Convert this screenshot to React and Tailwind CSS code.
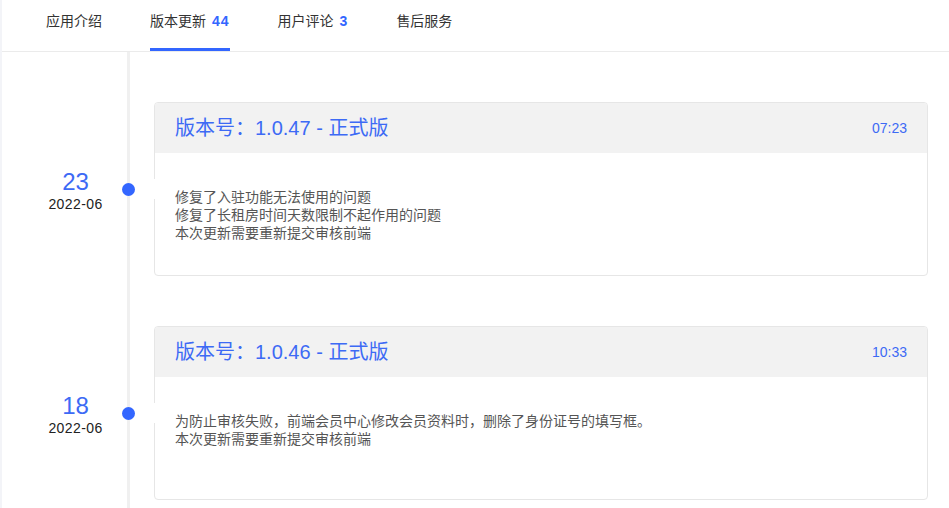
import React from 'react';

const tabs = [
  { label: '应用介绍' },
  { label: '版本更新', count: 44, active: true },
  { label: '用户评论', count: 3 },
  { label: '售后服务' },
];

const releases = [
  {
    day: '23',
    month: '2022-06',
    version: '1.0.47',
    time: '07:23',
    notes: ['修复了入驻功能无法使用的问题', '修复了长租房时间天数限制不起作用的问题', '本次更新需要重新提交审核前端'],
  },
  {
    day: '18',
    month: '2022-06',
    version: '1.0.46',
    time: '10:33',
    notes: ['为防止审核失败，前端会员中心修改会员资料时，删除了身份证号的填写框。', '本次更新需要重新提交审核前端'],
  },
];

const TabBar = () => (
  <div className="h-[52px] border-b border-[#ebebeb] flex gap-12 pl-[44px] shrink-0">
    {tabs.map((t) => (
      <div key={t.label} className="h-[51px] flex flex-col justify-between">
        <div className="pt-[11px] text-[14px] leading-[20px] text-[#333]">
          {t.label}
          {t.count !== undefined && (
            <span className="ml-[6px] font-bold tracking-[1px] text-[#3366ff]">{t.count}</span>
          )}
        </div>
        <div className={t.active ? 'h-[3px] bg-[#3366ff]' : 'h-[3px]'} />
      </div>
    ))}
  </div>
);

const ReleaseRow = ({ r }) => (
  <div className="flex shrink-0">
    <div className="w-[125px] pt-[50px] pl-[22px]">
      <div className="h-[174px] flex flex-col items-center justify-center pt-[4px]">
        <div className="text-[24px] leading-[26px] text-[#3d6af5]">{r.day}</div>
        <div className="text-[14px] leading-[18px] tracking-[0.4px] text-[#222]">{r.month}</div>
      </div>
    </div>
    <div className="w-[3px] bg-[#f0f0f0] relative">
      <div className="absolute left-[-5px] top-[131px] w-[13px] h-[13px] rounded-full bg-[#3366ff]" />
    </div>
    <div className="flex-1 pl-[24px] pr-[21px] pt-[50px]">
      <div className="relative h-[174px] border border-[#e6e6e6] rounded-[4px] bg-white">
        <div className="absolute left-[-1px] top-[76px] w-px h-5 bg-white" />
        <div className="h-[50px] bg-[#f2f2f2] rounded-t-[3px] px-5 flex items-center justify-between">
          <div className="text-[20px] text-[#3d6af5]">版本号：{r.version} - 正式版</div>
          <div className="text-[14px] text-[#3d6af5]">{r.time}</div>
        </div>
        <div className="px-5 pt-[35px] text-[14px] leading-[18px] text-[#555]">
          {r.notes.map((n) => (
            <div key={n}>{n}</div>
          ))}
        </div>
      </div>
    </div>
  </div>
);

export default function App() {
  return (
    <div
      className="w-[949px] h-[508px] overflow-hidden bg-white border-l-2 border-[#f3f4f8] flex flex-col"
      style={{ fontFamily: '"Liberation Sans", "Noto Sans CJK SC", sans-serif' }}
    >
      <TabBar />
      <div className="flex-1 flex flex-col">
        {releases.map((r) => (
          <ReleaseRow key={r.version} r={r} />
        ))}
        <div className="flex-1 flex">
          <div className="w-[125px]" />
          <div className="w-[3px] bg-[#f0f0f0]" />
        </div>
      </div>
    </div>
  );
}
